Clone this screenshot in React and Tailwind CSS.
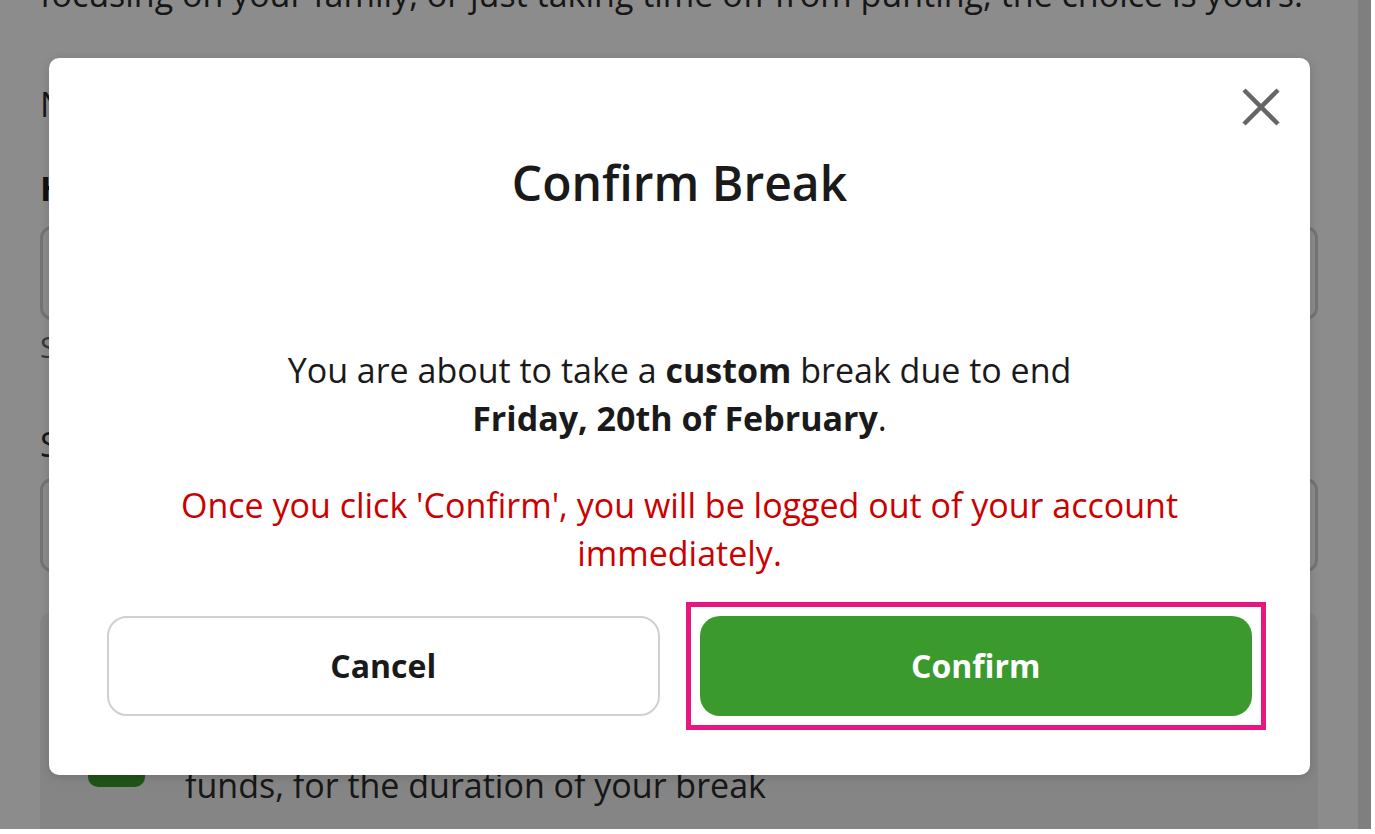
import React from 'react';

const font = "font-['Open_Sans','Liberation_Sans',sans-serif]";

const BackgroundPage = () => (
  <div className="relative w-[1371px] h-[829px] bg-white overflow-hidden">
    <div className="flex h-full">
      <div className="flex-1 pl-[40px] pr-[40px] flex flex-col">
        <p className="-mt-[30px] text-[34px] leading-[48px] whitespace-nowrap text-[#2a2a2a]">
          focusing on your family, or just taking time off from punting, the choice is yours.
        </p>
        <p className="mt-[62px] text-[34px] leading-[48px] text-[#2a2a2a]">Next, choose your break</p>
        <p className="mt-[36px] text-[34px] leading-[48px] font-bold text-[#1e1e1e]">How long</p>
        <div className="mt-[14px] h-[94px] shrink-0 rounded-[12px] border-[3px] border-[#d4d4d4]" />
        <p className="mt-[7px] text-[30px] leading-[40px] text-[#666]">Select a duration</p>
        <p className="mt-[53px] text-[34px] leading-[48px] text-[#2a2a2a]">Select date</p>
        <div className="mt-[10px] h-[94px] shrink-0 rounded-[12px] border-[3px] border-[#d4d4d4]" />
        <div className="mt-[40px] flex-1 rounded-t-[12px] bg-[#f2f2f2] pl-[48px] pt-[101px] flex gap-[40px] items-start">
          <div className="mt-[17px] w-[57px] h-[57px] rounded-[10px] bg-[#3a9a2e]" />
          <p className="text-[34px] leading-[48px] text-[#2a2a2a]">
            Prevent your account from depositing <br />funds, for the duration of your break
          </p>
        </div>
      </div>
      <div className="w-[13px] bg-[#e8e8e8]" />
    </div>
    <div className="absolute inset-0 bg-black/45" />
  </div>
);

const CloseIcon = () => (
  <svg width="40" height="40" viewBox="0 0 40 40" fill="none">
    <path d="M3 3 L37 37 M37 3 L3 37" stroke="#666666" strokeWidth="4.5" />
  </svg>
);

export default function App() {
  return (
    <div className={`relative w-[1375px] h-[834px] bg-white overflow-hidden ${font}`}>
      <BackgroundPage />

      {/* Modal */}
      <div className="absolute left-[49px] top-[58px] w-[1261px] h-[717px] bg-white rounded-[10px] shadow-[0_2px_10px_rgba(0,0,0,0.15)]">
        <button className="absolute right-[29px] top-[29px]">
          <CloseIcon />
        </button>

        <h2 className="pt-[93px] text-center text-[48px] leading-[64px] font-semibold text-[#1a1a1a]">
          Confirm Break
        </h2>

        <p className="mt-[131px] text-center text-[34px] leading-[48px] text-[#1a1a1a]">
          You are about to take a <span className="font-bold">custom</span> break due to end
          <br />
          <span className="font-bold">Friday, 20th of February</span>.
        </p>

        <p className="mt-[39px] mx-auto max-w-[1040px] text-center text-[34px] leading-[48px] text-[#cc0000]">
          Once you click 'Confirm', you will be logged out of your account immediately.
        </p>

        <div className="mt-[39px] px-[58px] grid grid-cols-2 gap-[40px]">
          <button className="h-[100px] rounded-[20px] border-2 border-[#d0d0d0] bg-white text-[32px] font-bold text-[#1a1a1a]">
            Cancel
          </button>
          <div className="relative">
            <button className="w-full h-[100px] rounded-[20px] bg-[#3a9a2e] text-[32px] font-bold text-white">
              Confirm
            </button>
            <span className="absolute -inset-[14px] border-[5px] border-[#e8177f] pointer-events-none" />
          </div>
        </div>
      </div>
    </div>
  );
}
